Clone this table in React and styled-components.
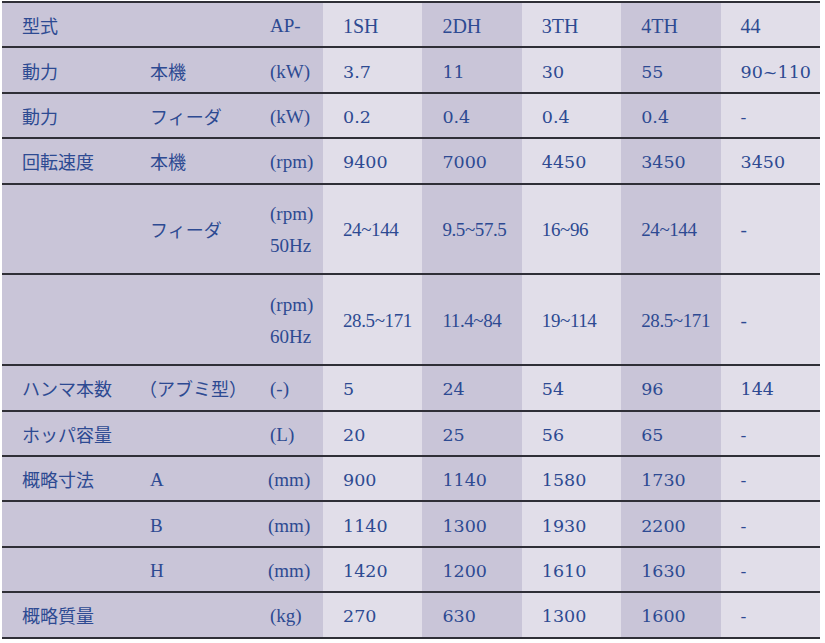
import styled, { createGlobalStyle } from "styled-components";

const GlobalStyle = createGlobalStyle`
  html, body {
    margin: 0;
    padding: 0;
    background: #ffffff;
  }
`;

const DARK = "#c9c5d8";
const LIGHT = "#e1dee9";
const INK = "#2d4a92";
const LINE = "#2f2f37";
const UNIT = 45.4;

const Page = styled.div`
  padding: 1px 0 0 2px;
  width: 818px;
  color: ${INK};
`;

const Table = styled.div`
  display: flex;
  flex-direction: column;
  width: 818px;
`;

const Row = styled.div`
  display: grid;
  grid-template-columns: 148px 118px 55px repeat(5, 1fr);
  box-sizing: border-box;
  height: ${(p) => (p.$span || 1) * UNIT}px;
  border-top: 2px solid ${LINE};

  &:last-child {
    height: ${UNIT + 2}px;
    border-bottom: 2px solid ${LINE};
  }
`;

const Label = styled.div`
  display: flex;
  align-items: center;
  background: ${DARK};
  padding-left: ${(p) => p.$indent || 0}px;
  padding-top: 1px;
  white-space: nowrap;
  font-family: "Noto Sans CJK JP", "Noto Sans", sans-serif;
  font-size: 18px;
  font-weight: 400;
  font-feature-settings: ${(p) => (p.$tight ? `"halt"` : "normal")};
  margin-left: ${(p) => (p.$tight ? -2 : 0)}px;
`;

const Latin = styled.span`
  font-family: "Liberation Serif", "Times New Roman", serif;
  font-size: 19px;
  font-weight: 400;
  padding-top: 2px;
`;

const Unit = styled.div`
  display: flex;
  flex-direction: column;
  justify-content: center;
  background: ${DARK};
  padding-left: ${(p) => p.$indent ?? 2}px;
  padding-top: 3px;
  white-space: nowrap;
  font-family: "Liberation Serif", "Times New Roman", serif;
  font-size: 19px;
  line-height: 32px;
`;

const Value = styled.div`
  display: flex;
  align-items: center;
  padding-left: 20px;
  padding-top: 3px;
  white-space: nowrap;
  background: ${(p) => (p.$shade ? DARK : LIGHT)};
  font-family: ${(p) =>
    p.$face === "wide"
      ? `"DejaVu Serif", "Liberation Serif", serif`
      : `"Liberation Serif", "Times New Roman", serif`};
  font-size: ${(p) =>
    p.$face === "wide" ? "17.5px" : p.$face === "head" ? "20px" : "19px"};
  letter-spacing: ${(p) => (p.$face === "cond" ? "-0.4px" : "0")};
`;

const rows = [
  { a: "型式", b: "", unit: ["AP-"], face: "head", values: ["1SH", "2DH", "3TH", "4TH", "44"] },
  { a: "動力", b: "本機", unit: ["(kW)"], face: "wide", values: ["3.7", "11", "30", "55", "90~110"] },
  { a: "動力", b: "フィーダ", unit: ["(kW)"], face: "wide", values: ["0.2", "0.4", "0.4", "0.4", "-"] },
  { a: "回転速度", b: "本機", unit: ["(rpm)"], face: "wide", values: ["9400", "7000", "4450", "3450", "3450"] },
  { a: "", b: "フィーダ", unit: ["(rpm)", "50Hz"], span: 2, face: "cond", values: ["24~144", "9.5~57.5", "16~96", "24~144", "-"] },
  { a: "", b: "", unit: ["(rpm)", "60Hz"], span: 2, face: "cond", values: ["28.5~171", "11.4~84", "19~114", "28.5~171", "-"] },
  { a: "ハンマ本数", b: "（アブミ型）", tight: true, unit: ["(-)"], face: "wide", values: ["5", "24", "54", "96", "144"] },
  { a: "ホッパ容量", b: "", unit: ["(L)"], face: "wide", values: ["20", "25", "56", "65", "-"] },
  { a: "概略寸法", b: "A", latin: true, unit: ["(mm)"], shift: -3, face: "wide", values: ["900", "1140", "1580", "1730", "-"] },
  { a: "", b: "B", latin: true, unit: ["(mm)"], shift: -3, face: "wide", values: ["1140", "1300", "1930", "2200", "-"] },
  { a: "", b: "H", latin: true, unit: ["(mm)"], shift: -3, face: "wide", values: ["1420", "1200", "1610", "1630", "-"] },
  { a: "概略質量", b: "", unit: ["(kg)"], face: "wide", values: ["270", "630", "1300", "1600", "-"] },
];

export default function App() {
  return (
    <Page>
      <GlobalStyle />
      <Table>
        {rows.map((row, i) => (
          <Row key={i} $span={row.span}>
            <Label $indent={20}>{row.a}</Label>
            <Label $tight={row.tight}>
              {row.latin ? <Latin>{row.b}</Latin> : row.b}
            </Label>
            <Unit $indent={row.shift}>
              {row.unit.map((u) => (
                <span key={u}>{u}</span>
              ))}
            </Unit>
            {row.values.map((v, j) => (
              <Value key={j} $shade={j % 2 === 1} $face={row.face}>
                {v}
              </Value>
            ))}
          </Row>
        ))}
      </Table>
    </Page>
  );
}
